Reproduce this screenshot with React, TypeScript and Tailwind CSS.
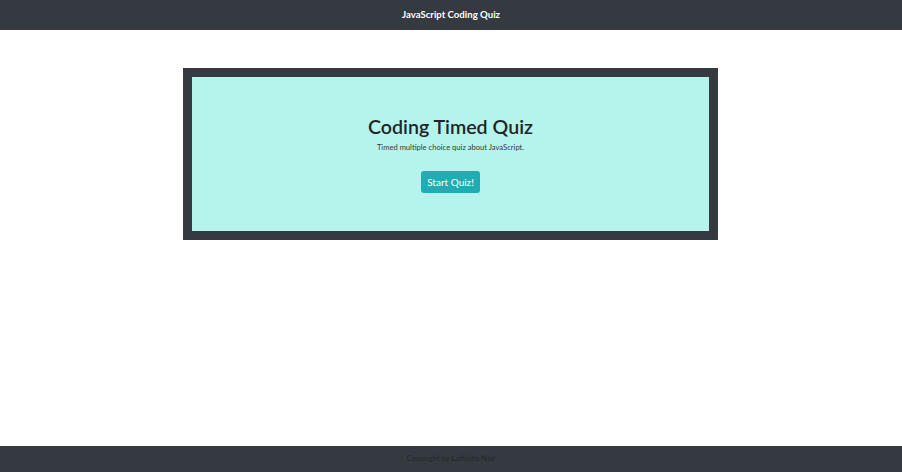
export default function App() {
  return (
    <div
      className="flex h-screen flex-col bg-white text-[#212529]"
      style={{ fontFamily: 'Lato, "Open Sans", sans-serif' }}
    >
      <header className="flex h-[30px] items-center justify-center bg-[#343a40]">
        <h1 className="text-[9.6px] font-bold text-white">JavaScript Coding Quiz</h1>
      </header>

      <main className="flex flex-1 justify-center pt-[38px]">
        <div className="mr-px h-[172px] w-[535px] bg-[#343a40] p-[9px]">
          <div className="flex h-full flex-col items-center bg-[#b4f4ec] pt-[37px]">
            <h2 className="text-[19.6px] leading-[26px] font-semibold">Coding Timed Quiz</h2>
            <p className="mt-[1px] text-[7.6px] leading-[12px] text-[#343a40]">
              Timed multiple choice quiz about JavaScript.
            </p>
            <button className="mt-[18px] h-[22px] w-[59px] rounded-[3px] bg-[#1fadb3] text-[10px] text-white">
              Start Quiz!
            </button>
          </div>
        </div>
      </main>

      <footer className="flex h-[26px] items-center justify-center bg-[#343a40]">
        <p className="text-[7.6px] text-[#23282c]">Copyright by Lathisha Nair</p>
      </footer>
    </div>
  )
}
